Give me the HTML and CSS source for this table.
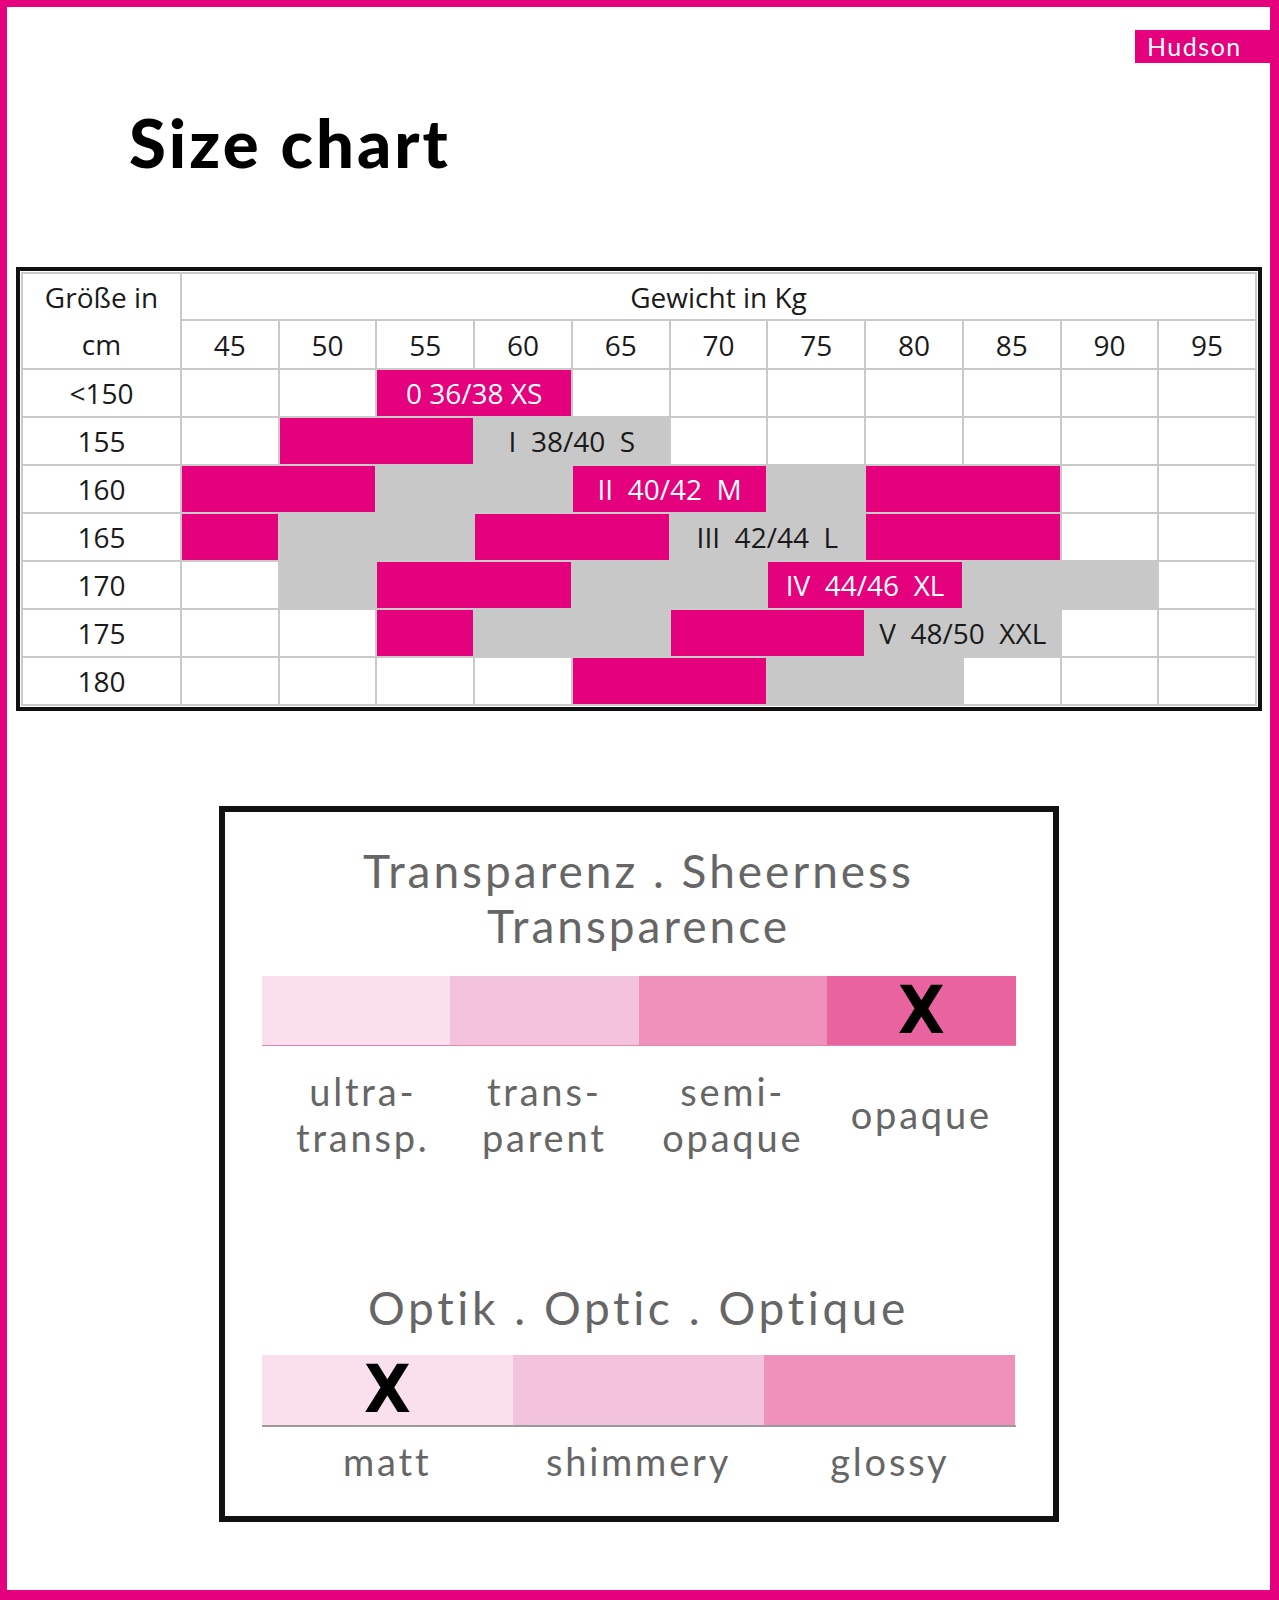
FILE: index.html
```html
<!DOCTYPE html>
<html lang="de">
<head>
<meta charset="utf-8">
<title>Size chart</title>
<link rel="stylesheet" href="styles.css">
</head>
<body>
<div class="page">
  <div class="brand">Hudson</div>
  <h1 class="title">Size chart</h1>

  <div class="chart">
    <div class="grid">
      <div class="c hd-size"><span>Größe in</span><span>cm</span></div>
      <div class="c hd-weight">Gewicht in Kg</div>
      <div class="c">45</div><div class="c">50</div><div class="c">55</div><div class="c">60</div><div class="c">65</div><div class="c">70</div><div class="c">75</div><div class="c">80</div><div class="c">85</div><div class="c">90</div><div class="c">95</div>

      <div class="c">&lt;150</div>
      <div class="c"></div><div class="c"></div>
      <div class="c s2 p">0 36/38 XS</div>
      <div class="c"></div><div class="c"></div><div class="c"></div><div class="c"></div><div class="c"></div><div class="c"></div><div class="c"></div>

      <div class="c">155</div>
      <div class="c"></div>
      <div class="c s2 p"></div>
      <div class="c s2 g">I  38/40  S</div>
      <div class="c"></div><div class="c"></div><div class="c"></div><div class="c"></div><div class="c"></div><div class="c"></div>

      <div class="c">160</div>
      <div class="c s2 p"></div>
      <div class="c s2 g"></div>
      <div class="c s2 p">II  40/42  M</div>
      <div class="c g"></div>
      <div class="c s2 p"></div>
      <div class="c"></div><div class="c"></div>

      <div class="c">165</div>
      <div class="c p"></div>
      <div class="c s2 g"></div>
      <div class="c s2 p"></div>
      <div class="c s2 g">III  42/44  L</div>
      <div class="c s2 p"></div>
      <div class="c"></div><div class="c"></div>

      <div class="c">170</div>
      <div class="c"></div>
      <div class="c g"></div>
      <div class="c s2 p"></div>
      <div class="c s2 g"></div>
      <div class="c s2 p">IV  44/46  XL</div>
      <div class="c s2 g"></div>
      <div class="c"></div>

      <div class="c">175</div>
      <div class="c"></div><div class="c"></div>
      <div class="c p"></div>
      <div class="c s2 g"></div>
      <div class="c s2 p"></div>
      <div class="c s2 g">V  48/50  XXL</div>
      <div class="c"></div><div class="c"></div>

      <div class="c">180</div>
      <div class="c"></div><div class="c"></div><div class="c"></div><div class="c"></div>
      <div class="c s2 p"></div>
      <div class="c s2 g"></div>
      <div class="c"></div><div class="c"></div><div class="c"></div>
    </div>
  </div>

  <div class="props">
    <div class="ptitle">Transparenz . Sheerness<br>Transparence</div>
    <div class="bar bar1">
      <div class="seg t1"></div>
      <div class="seg t2"></div>
      <div class="seg t3"></div>
      <div class="seg t4"><span class="mark">X</span></div>
    </div>
    <div class="labels labels1">
      <div class="lab lab-first"><span>ultra-</span><span>transp.</span></div>
      <div class="lab"><span>trans-</span><span>parent</span></div>
      <div class="lab"><span>semi-</span><span>opaque</span></div>
      <div class="lab"><span>opaque</span></div>
    </div>

    <div class="ptitle ptitle2">Optik . Optic . Optique</div>
    <div class="bar bar2">
      <div class="seg t1"><span class="mark">X</span></div>
      <div class="seg t2"></div>
      <div class="seg t3"></div>
    </div>
    <div class="labels labels2">
      <div class="lab"><span>matt</span></div>
      <div class="lab"><span>shimmery</span></div>
      <div class="lab"><span>glossy</span></div>
    </div>
  </div>
</div>
</body>
</html>
```

FILE: styles.css
```css
* {
  box-sizing: border-box;
  margin: 0;
  padding: 0;
}

html, body {
  background: #fff;
}

.page {
  width: 1279px;
  height: 1600px;
  border-style: solid;
  border-color: #e5007d;
  border-width: 7px 9px 10px 7px;
  display: flex;
  flex-direction: column;
  background: #fff;
}

.brand {
  align-self: flex-end;
  margin-top: 23px;
  width: 135px;
  height: 33px;
  background: #e5007d;
  color: #fff;
  font-family: Lato, "Open Sans", sans-serif;
  font-size: 25px;
  letter-spacing: 1.5px;
  line-height: 33px;
  padding-left: 12px;
}

.title {
  font-family: Lato, "Open Sans", sans-serif;
  font-weight: 900;
  font-size: 67px;
  line-height: 66px;
  letter-spacing: 3px;
  margin: 46px 0 0 122px;
  color: #000;
}

.chart {
  margin: 92px 8px 0 9px;
  border: 4px solid #111;
  padding: 1px;
  background: #fff;
}

.grid {
  display: grid;
  grid-template-columns: 157px repeat(11, 1fr);
  grid-template-rows: 45px 47px repeat(7, 46px);
  gap: 2px;
  background: #c9c9c9;
  border: 2px solid #c9c9c9;
  font-family: "Open Sans", sans-serif;
  font-size: 28px;
  color: #1a1a1a;
}

.c {
  background: #fff;
  display: flex;
  align-items: center;
  justify-content: center;
  white-space: pre;
}

.hd-size {
  grid-row: span 2;
  flex-direction: column;
  line-height: 47px;
}

.hd-weight {
  grid-column: span 11;
}

.s2 {
  grid-column: span 2;
}

.p {
  background: #e5007d;
  color: #fff;
}

.g {
  background: #c8c8c8;
}

.props {
  width: 840px;
  margin: 95px auto 0;
  border: 6px solid #111;
  padding: 31px 0 32px;
  font-family: Lato, "Open Sans", sans-serif;
  color: #666;
  display: flex;
  flex-direction: column;
  align-items: center;
}

.ptitle {
  font-size: 46px;
  line-height: 55px;
  letter-spacing: 3px;
  text-align: center;
}

.ptitle2 {
  margin-top: 120px;
  letter-spacing: 3.6px;
}

.bar {
  display: flex;
  width: 754px;
  height: 70px;
}

.bar1 {
  margin-top: 23px;
  border-bottom: 1px solid #e585b0;
}

.bar2 {
  margin-top: 20px;
  height: 72px;
  border-bottom: 2px solid #9a9a9a;
}

.seg {
  flex: 1;
  display: flex;
  align-items: center;
  justify-content: center;
}

.t1 { background: #f9e0ec; }
.t2 { background: #f3c3db; }
.t3 { background: #ef91bb; }
.t4 { background: #e9649f; }

.mark {
  font-family: "DejaVu Sans", sans-serif;
  font-weight: 700;
  font-size: 66px;
  line-height: 1;
  color: #000;
  transform: scaleX(0.92);
}

.labels {
  display: flex;
  width: 754px;
}

.labels1 {
  margin-top: 22px;
}

.labels1 .lab {
  flex: 0 0 25%;
  min-height: 92px;
}

.labels2 {
  margin-top: 11px;
}

.lab {
  flex: 1;
  display: flex;
  flex-direction: column;
  align-items: center;
  justify-content: center;
  font-size: 38px;
  line-height: 46px;
  letter-spacing: 2.8px;
}

.labels1 .lab-first {
  padding-left: 14px;
}
```
